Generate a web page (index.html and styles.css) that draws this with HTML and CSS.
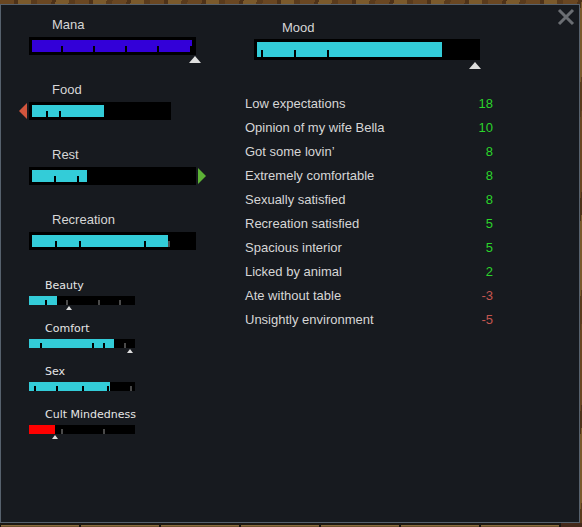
FILE: index.html
```html
<!DOCTYPE html>
<html lang="en">
<head>
    <meta charset="UTF-8">
    <meta name="viewport" content="width=device-width, initial-scale=1.0">
    <title>Needs</title>
    <link rel="stylesheet" href="styles.css">
</head>
<body>
    <div class="panel">
        <button class="close" aria-label="Close">
            <svg width="18" height="18" viewBox="0 0 18 18">
                <path d="M2 2 L16 16 M16 2 L2 16" stroke="#6b6e73" stroke-width="3" fill="none"/>
            </svg>
        </button>
        <div class="columns">
            <div class="needs">
                <div class="need">
                    <div class="need-label">Mana</div>
                    <div class="bar">
                        <div class="track">
                            <div class="fill mana" style="width:100%"></div>
                            <i class="tick" style="left:18%"></i>
                            <i class="tick" style="left:38%"></i>
                            <i class="tick" style="left:58%"></i>
                            <i class="tick" style="left:78%"></i>
                            <i class="tick" style="left:98.5%"></i>
                        </div>
                        <span class="marker" style="left:160px"></span>
                    </div>
                </div>
                <div class="need">
                    <div class="need-label">Food</div>
                    <div class="bar short">
                        <div class="track">
                            <div class="fill" style="width:53.5%"></div>
                            <i class="tick" style="left:10%"></i>
                            <i class="tick" style="left:20%"></i>
                        </div>
                        <span class="arrow down"></span>
                    </div>
                </div>
                <div class="need">
                    <div class="need-label">Rest</div>
                    <div class="bar">
                        <div class="track">
                            <div class="fill" style="width:34.5%"></div>
                            <i class="tick" style="left:14%"></i>
                            <i class="tick" style="left:28%"></i>
                        </div>
                        <span class="arrow up"></span>
                    </div>
                </div>
                <div class="need">
                    <div class="need-label">Recreation</div>
                    <div class="bar">
                        <div class="track">
                            <div class="fill" style="width:85%"></div>
                            <i class="tick" style="left:14.5%"></i>
                            <i class="tick" style="left:29.5%"></i>
                            <i class="tick" style="left:70%"></i>
                            <i class="tick past" style="left:85%"></i>
                        </div>
                    </div>
                </div>

                <div class="small-needs">
                    <div class="need small">
                        <div class="need-label">Beauty</div>
                        <div class="bar">
                            <div class="track">
                                <div class="fill" style="width:26.5%"></div>
                                <i class="tick" style="left:15%"></i>
                                <i class="tick past" style="left:35%"></i>
                                <i class="tick past" style="left:65%"></i>
                                <i class="tick past" style="left:85%"></i>
                            </div>
                            <span class="marker" style="left:37px"></span>
                        </div>
                    </div>
                    <div class="need small">
                        <div class="need-label">Comfort</div>
                        <div class="bar">
                            <div class="track">
                                <div class="fill" style="width:80%"></div>
                                <i class="tick" style="left:10%"></i>
                                <i class="tick" style="left:59%"></i>
                                <i class="tick" style="left:70%"></i>
                                <i class="tick past" style="left:90%"></i>
                            </div>
                            <span class="marker" style="left:98px"></span>
                        </div>
                    </div>
                    <div class="need small">
                        <div class="need-label">Sex</div>
                        <div class="bar">
                            <div class="track">
                                <div class="fill" style="width:76.5%"></div>
                                <i class="tick" style="left:5%"></i>
                                <i class="tick" style="left:25%"></i>
                                <i class="tick" style="left:50%"></i>
                                <i class="tick" style="left:74%"></i>
                                <i class="tick past" style="left:95%"></i>
                            </div>
                        </div>
                    </div>
                    <div class="need small">
                        <div class="need-label">Cult Mindedness</div>
                        <div class="bar">
                            <div class="track">
                                <div class="fill cult" style="width:24.5%"></div>
                                <i class="tick past" style="left:30%"></i>
                                <i class="tick past" style="left:70%"></i>
                            </div>
                            <span class="marker" style="left:23px"></span>
                        </div>
                    </div>
                </div>
            </div>

            <div class="mood-col">
                <div class="need mood">
                    <div class="need-label">Mood</div>
                    <div class="bar">
                        <div class="track">
                            <div class="fill" style="width:84%"></div>
                            <i class="tick" style="left:1.7%"></i>
                            <i class="tick" style="left:16.7%"></i>
                            <i class="tick" style="left:31.7%"></i>
                        </div>
                        <span class="marker" style="left:215px"></span>
                    </div>
                </div>
                <ul class="thoughts">
                    <li><span>Low expectations</span><span class="pos">18</span></li>
                    <li><span>Opinion of my wife Bella</span><span class="pos">10</span></li>
                    <li><span>Got some lovin’</span><span class="pos">8</span></li>
                    <li><span>Extremely comfortable</span><span class="pos">8</span></li>
                    <li><span>Sexually satisfied</span><span class="pos">8</span></li>
                    <li><span>Recreation satisfied</span><span class="pos">5</span></li>
                    <li><span>Spacious interior</span><span class="pos">5</span></li>
                    <li><span>Licked by animal</span><span class="pos">2</span></li>
                    <li><span>Ate without table</span><span class="neg">-3</span></li>
                    <li><span>Unsightly environment</span><span class="neg">-5</span></li>
                </ul>
            </div>
        </div>
    </div>
    <div class="tabs">
        <div class="tab"></div>
        <div class="tab"></div>
        <div class="tab"></div>
        <div class="tab"></div>
        <div class="tab"></div>
        <div class="tab"></div>
        <div class="tab"></div>
        <div class="tab-rest"></div>
    </div>
</body>
</html>
```

FILE: styles.css
```css
* {
    box-sizing: border-box;
}
body {
    margin: 0;
    width: 582px;
    height: 527px;
    overflow: hidden;
    font-family: "Liberation Sans", Arial, sans-serif;
    background: repeating-linear-gradient(100deg, #6a4722 0 14px, #4e3218 14px 18px, #7b5a2c 18px 31px, #5a3b1c 31px 37px);
}
.panel {
    position: relative;
    margin-top: 4px;
    width: 580px;
    height: 519px;
    border: 1px solid #56616d;
    background: #171a1f;
}
.close {
    position: absolute;
    top: 3px;
    right: 4px;
    width: 18px;
    height: 18px;
    padding: 0;
    border: 0;
    background: none;
}
.close svg {
    display: block;
}
.columns {
    display: grid;
    grid-template-columns: 216px 1fr;
    padding: 12px 0 0 28px;
}

/* need bars */
.need {
    margin-bottom: 27px;
}
.need-label {
    margin: 0 0 5px 23px;
    font-size: 13px;
    line-height: 15px;
    color: #d6d6d6;
}
.bar {
    position: relative;
    width: 167px;
    height: 18px;
    padding: 3px 4px 3px 3px;
    background: #000;
}
.bar.short {
    width: 142px;
}
.track {
    position: relative;
    height: 100%;
}
.fill {
    height: 100%;
    background: #33ccd8;
}
.fill.mana {
    background: #3300d8;
}
.fill.cult {
    background: #ff0000;
}
.tick {
    position: absolute;
    bottom: 0;
    width: 2px;
    height: 50%;
    background: #000;
}
.tick.past {
    background: #4a4a4a;
}
.marker {
    position: absolute;
    top: 100%;
    margin-top: 1px;
    width: 0;
    height: 0;
    border-left: 6px solid transparent;
    border-right: 6px solid transparent;
    border-bottom: 7px solid #dedede;
}
.arrow {
    position: absolute;
    top: 1px;
    width: 0;
    height: 0;
    border-top: 8px solid transparent;
    border-bottom: 8px solid transparent;
}
.arrow.down {
    left: -10px;
    border-right: 8px solid #d2553d;
}
.arrow.up {
    right: -10px;
    border-left: 8px solid #5db236;
}

/* small needs */
.small-needs {
    padding-top: 3px;
}
.small {
    margin-bottom: 18px;
}
.small .need-label {
    margin: 0 0 4px 16px;
    font-family: "DejaVu Sans", sans-serif;
    font-size: 11px;
    line-height: 12px;
    color: #e6e6e6;
}
.small .bar {
    width: 106px;
    height: 9px;
    padding: 0;
}
.small .tick {
    height: 5px;
}
.small .marker {
    border-left-width: 3px;
    border-right-width: 3px;
    border-bottom-width: 4px;
    width: 1px;
}

/* mood column */
.mood {
    margin: 3px 0 0;
}
.mood .need-label {
    margin: 0 0 4px 37px;
}
.mood .bar {
    margin-left: 9px;
    width: 226px;
    height: 21px;
    padding: 3px;
}
.mood .marker {
    margin-top: 2px;
}
.thoughts {
    list-style: none;
    margin: 32px 0 0;
    padding: 0;
    width: 248px;
}
.thoughts li {
    display: flex;
    justify-content: space-between;
    font-size: 13px;
    line-height: 24px;
    color: #d6d6d6;
}
.pos {
    color: #2bd42b;
}
.neg {
    color: #c4564f;
}

/* bottom tab strip */
.tabs {
    display: flex;
    gap: 2px;
    height: 4px;
    padding: 2px 0 0 1px;
    background: #1b1712;
}
.tab {
    width: 78px;
    background: #6d532f;
    border-top: 1px solid #8b6c3d;
}
.tab-rest {
    flex: 1;
    margin-top: -2px;
    background: #45291a;
}
```
